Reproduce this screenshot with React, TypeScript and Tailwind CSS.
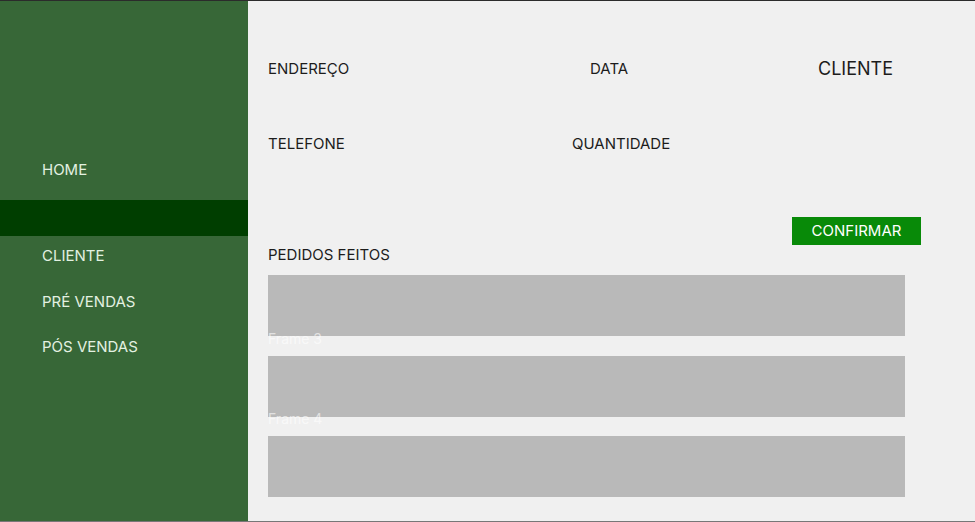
const menu = ['CLIENTE', 'PRÉ VENDAS', 'PÓS VENDAS'];

const Sidebar = () => (
  <aside className="w-[248px] shrink-0 bg-[#376737] flex flex-col pt-[159px] text-[15px] leading-[20px] text-[#e3f1e1]">
    <div className="pl-[42px]">HOME</div>
    {/* selected / active bar */}
    <div className="h-[36px] mt-[20px] bg-[#003e00]" />
    <div className="flex flex-col gap-[25.5px] mt-[10px] pl-[42px]">
      {menu.map((m) => (
        <div key={m}>{m}</div>
      ))}
    </div>
  </aside>
);

const Box = ({ label }: { label?: string }) => (
  <div className="relative w-[637px] h-[61px] bg-[#b9b9b9]">
    {label && (
      <span className="absolute left-0 -top-[26px] text-[14px] leading-[18px] text-white/60">{label}</span>
    )}
  </div>
);

export default function App() {
  return (
    <div
      className="w-[975px] h-[522px] flex border-t border-[#2b2b2b] border-b border-b-[#777]"
      style={{ fontFamily: 'Inter, "Noto Sans", sans-serif' }}
    >
      <Sidebar />
      <main className="flex-1 bg-[#f0f0f0] pl-[20px] pt-[57px] text-[15px] leading-[20px] text-[#1c1c1c]">
        <div className="flex items-center">
          <span className="w-[322px]">ENDEREÇO</span>
          <span className="w-[228px]">DATA</span>
          <span className="text-[18px] leading-[22px]">CLIENTE</span>
        </div>
        <div className="flex items-center mt-[54px]">
          <span className="w-[304px]">TELEFONE</span>
          <span>QUANTIDADE</span>
        </div>
        <div className="flex justify-end pr-[54px] mt-[63px]">
          <button className="w-[129px] h-[28px] bg-[#088a08] text-white text-[15px]">CONFIRMAR</button>
        </div>
        <div>PEDIDOS FEITOS</div>
        <div className="flex flex-col gap-[19.5px] mt-[10px]">
          <Box />
          <Box label="Frame 3" />
          <Box label="Frame 4" />
        </div>
      </main>
    </div>
  );
}
